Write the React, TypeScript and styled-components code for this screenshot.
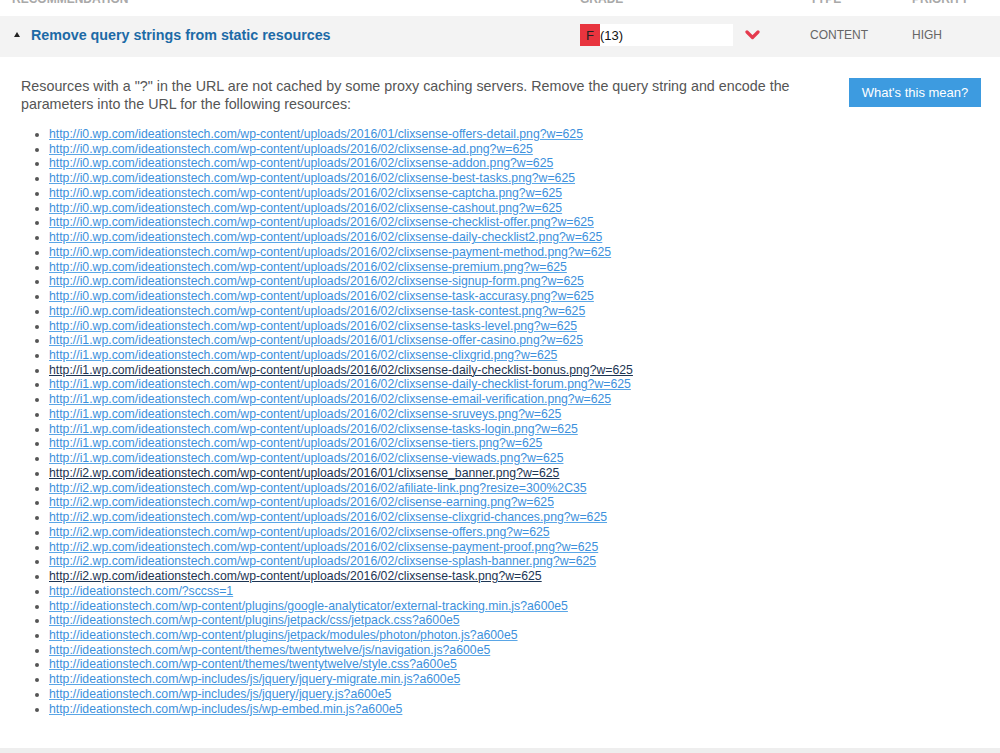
import React from 'react'
import styled, { createGlobalStyle } from 'styled-components'

const GlobalStyle = createGlobalStyle`
  body {
    margin: 0;
    background: #fff;
    font-family: "Liberation Sans", Arial, Helvetica, sans-serif;
  }
`;

const Columns = `
  display: grid;
  grid-template-columns: 568px 230px 102px 1fr;
  padding-left: 12px;
`;

// header labels sit mostly above the top edge, as in the scrolled capture
const HeaderRow = styled.div`
  ${Columns}
  height: 16px;
  align-items: start;

  span {
    font-size: 12px;
    line-height: 0;
    margin-top: -1px;
    font-weight: bold;
    color: #a9a9a9;
    text-transform: uppercase;
  }
`;

const RuleRow = styled.div`
  ${Columns}
  height: 41px;
  box-sizing: border-box;
  padding-bottom: 3px;
  align-items: center;
  background: #f3f3f3;
`;

const Title = styled.a`
  display: flex;
  align-items: center;
  gap: 11px;
  padding-left: 2px;
  font-size: 14.3px;
  font-weight: bold;
  color: #1c6aa6;
  text-decoration: none;

  &::before {
    content: "";
    border-left: 3.5px solid transparent;
    border-right: 3.5px solid transparent;
    border-bottom: 5px solid #222;
    margin-top: -1px;
  }
`;

const GradeCell = styled.div`
  display: flex;
  align-items: center;
`;

const GradeBar = styled.div`
  display: flex;
  align-items: center;
  width: 153px;
  height: 22px;
  background: #fff;
  font-size: 13px;
  color: #111;
`;

const GradeLetter = styled.span`
  display: flex;
  align-items: center;
  justify-content: center;
  width: 20px;
  height: 100%;
  background: ${props => props.color};
  color: #222;
`;

const Chevron = styled.svg`
  margin-left: 12px;
`;

const Cell = styled.span`
  font-size: 12px;
  color: #666;
  text-transform: uppercase;
`;

const Details = styled.div`
  padding: 20px 19px 32px 21px;
  border-bottom: 5px solid #eeeeee;
`;

const Intro = styled.div`
  display: flex;
  justify-content: space-between;
  align-items: flex-start;
  gap: 40px;

  p {
    margin: 0;
    font-size: 14.3px;
    line-height: 18px;
    color: #555;
  }
`;

const InfoButton = styled.a`
  flex: none;
  display: flex;
  align-items: center;
  justify-content: center;
  width: 132px;
  height: 29px;
  margin-top: 1px;
  background: #3d9be0;
  color: #fff;
  font-size: 13px;
  text-decoration: none;
`;

const UrlList = styled.ul`
  margin: 14px 0 0;
  padding-left: 28px;
  list-style: disc;
  color: #555;

  li {
    font-size: 12.25px;
    line-height: 14.74px;
  }

  li::marker {
    font-size: 12px;
  }
`;

const Url = styled.a<{ $visited?: boolean }>`
  color: ${props => props.$visited ? '#1d3553' : '#3c90dc'};
  text-decoration: underline;
  text-decoration-color: ${props => props.$visited ? '#1d3553' : '#5aa6e6'};
`;

const urls: [string, boolean?][] = [
  ['http://i0.wp.com/ideationstech.com/wp-content/uploads/2016/01/clixsense-offers-detail.png?w=625'],
  ['http://i0.wp.com/ideationstech.com/wp-content/uploads/2016/02/clixsense-ad.png?w=625'],
  ['http://i0.wp.com/ideationstech.com/wp-content/uploads/2016/02/clixsense-addon.png?w=625'],
  ['http://i0.wp.com/ideationstech.com/wp-content/uploads/2016/02/clixsense-best-tasks.png?w=625'],
  ['http://i0.wp.com/ideationstech.com/wp-content/uploads/2016/02/clixsense-captcha.png?w=625'],
  ['http://i0.wp.com/ideationstech.com/wp-content/uploads/2016/02/clixsense-cashout.png?w=625'],
  ['http://i0.wp.com/ideationstech.com/wp-content/uploads/2016/02/clixsense-checklist-offer.png?w=625'],
  ['http://i0.wp.com/ideationstech.com/wp-content/uploads/2016/02/clixsense-daily-checklist2.png?w=625'],
  ['http://i0.wp.com/ideationstech.com/wp-content/uploads/2016/02/clixsense-payment-method.png?w=625'],
  ['http://i0.wp.com/ideationstech.com/wp-content/uploads/2016/02/clixsense-premium.png?w=625'],
  ['http://i0.wp.com/ideationstech.com/wp-content/uploads/2016/02/clixsense-signup-form.png?w=625'],
  ['http://i0.wp.com/ideationstech.com/wp-content/uploads/2016/02/clixsense-task-accurasy.png?w=625'],
  ['http://i0.wp.com/ideationstech.com/wp-content/uploads/2016/02/clixsense-task-contest.png?w=625'],
  ['http://i0.wp.com/ideationstech.com/wp-content/uploads/2016/02/clixsense-tasks-level.png?w=625'],
  ['http://i1.wp.com/ideationstech.com/wp-content/uploads/2016/01/clixsense-offer-casino.png?w=625'],
  ['http://i1.wp.com/ideationstech.com/wp-content/uploads/2016/02/clixsense-clixgrid.png?w=625'],
  ['http://i1.wp.com/ideationstech.com/wp-content/uploads/2016/02/clixsense-daily-checklist-bonus.png?w=625', true],
  ['http://i1.wp.com/ideationstech.com/wp-content/uploads/2016/02/clixsense-daily-checklist-forum.png?w=625'],
  ['http://i1.wp.com/ideationstech.com/wp-content/uploads/2016/02/clixsense-email-verification.png?w=625'],
  ['http://i1.wp.com/ideationstech.com/wp-content/uploads/2016/02/clixsense-sruveys.png?w=625'],
  ['http://i1.wp.com/ideationstech.com/wp-content/uploads/2016/02/clixsense-tasks-login.png?w=625'],
  ['http://i1.wp.com/ideationstech.com/wp-content/uploads/2016/02/clixsense-tiers.png?w=625'],
  ['http://i1.wp.com/ideationstech.com/wp-content/uploads/2016/02/clixsense-viewads.png?w=625'],
  ['http://i2.wp.com/ideationstech.com/wp-content/uploads/2016/01/clixsense_banner.png?w=625', true],
  ['http://i2.wp.com/ideationstech.com/wp-content/uploads/2016/02/afiliate-link.png?resize=300%2C35'],
  ['http://i2.wp.com/ideationstech.com/wp-content/uploads/2016/02/clisense-earning.png?w=625'],
  ['http://i2.wp.com/ideationstech.com/wp-content/uploads/2016/02/clixsense-clixgrid-chances.png?w=625'],
  ['http://i2.wp.com/ideationstech.com/wp-content/uploads/2016/02/clixsense-offers.png?w=625'],
  ['http://i2.wp.com/ideationstech.com/wp-content/uploads/2016/02/clixsense-payment-proof.png?w=625'],
  ['http://i2.wp.com/ideationstech.com/wp-content/uploads/2016/02/clixsense-splash-banner.png?w=625'],
  ['http://i2.wp.com/ideationstech.com/wp-content/uploads/2016/02/clixsense-task.png?w=625', true],
  ['http://ideationstech.com/?sccss=1'],
  ['http://ideationstech.com/wp-content/plugins/google-analyticator/external-tracking.min.js?a600e5'],
  ['http://ideationstech.com/wp-content/plugins/jetpack/css/jetpack.css?a600e5'],
  ['http://ideationstech.com/wp-content/plugins/jetpack/modules/photon/photon.js?a600e5'],
  ['http://ideationstech.com/wp-content/themes/twentytwelve/js/navigation.js?a600e5'],
  ['http://ideationstech.com/wp-content/themes/twentytwelve/style.css?a600e5'],
  ['http://ideationstech.com/wp-includes/js/jquery/jquery-migrate.min.js?a600e5'],
  ['http://ideationstech.com/wp-includes/js/jquery/jquery.js?a600e5'],
  ['http://ideationstech.com/wp-includes/js/wp-embed.min.js?a600e5'],
];

export default function App() {
  return (
    <>
      <GlobalStyle />
      <HeaderRow>
        <span>Recommendation</span>
        <span>Grade</span>
        <span>Type</span>
        <span>Priority</span>
      </HeaderRow>
      <RuleRow>
        <Title href="#">Remove query strings from static resources</Title>
        <GradeCell>
          <GradeBar>
            <GradeLetter color="#e8343e">F</GradeLetter>
            (13)
          </GradeBar>
          <Chevron width="15" height="10" viewBox="0 0 15 10">
            <polyline points="2,2 7.5,7.5 13,2" fill="none" stroke="#e53a4d" strokeWidth="3.2" strokeLinecap="round" strokeLinejoin="round" />
          </Chevron>
        </GradeCell>
        <Cell>Content</Cell>
        <Cell>High</Cell>
      </RuleRow>
      <Details>
        <Intro>
          <p>
            Resources with a "?" in the URL are not cached by some proxy caching servers. Remove the query string and encode the
            parameters into the URL for the following resources:
          </p>
          <InfoButton href="#">What's this mean?</InfoButton>
        </Intro>
        <UrlList>
          {urls.map(([u, visited]) => (
            <li key={u}>
              <Url href="#" $visited={visited}>{u}</Url>
            </li>
          ))}
        </UrlList>
      </Details>
    </>
  )
}
